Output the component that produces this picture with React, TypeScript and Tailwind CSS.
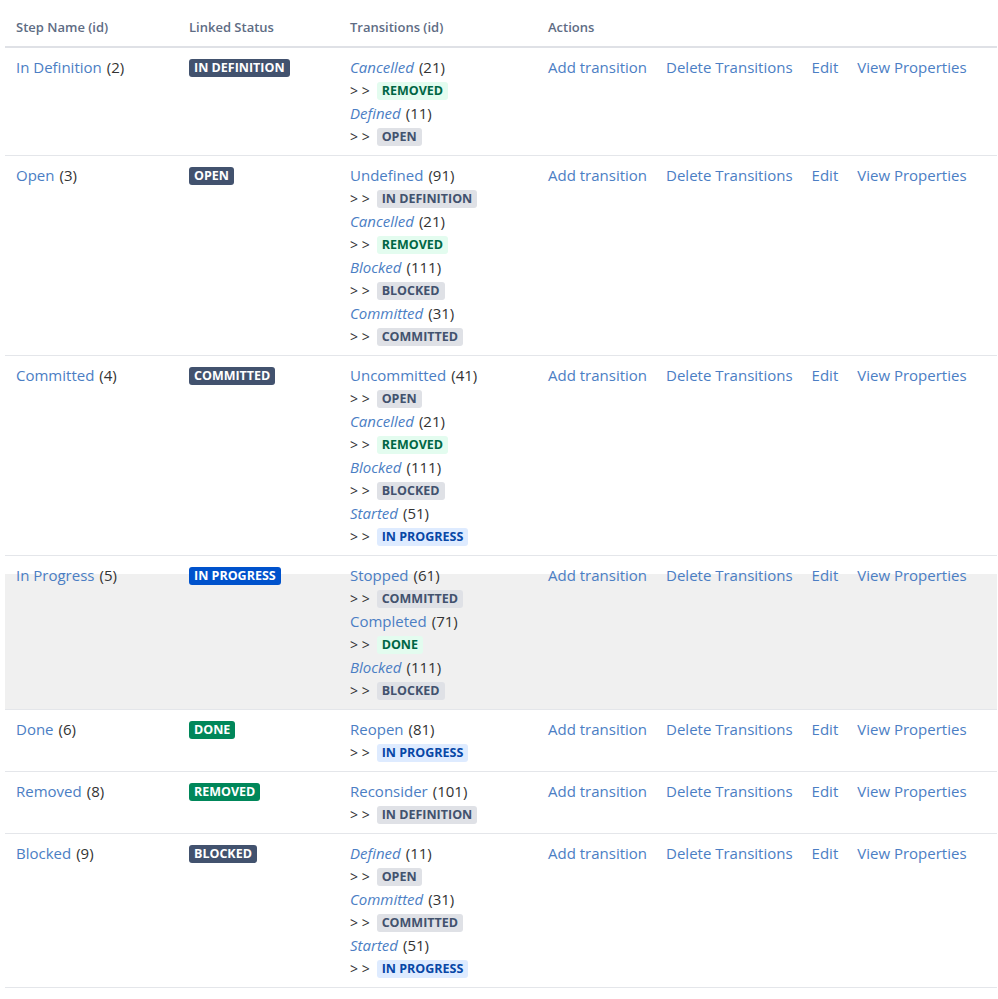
import React from "react";

type Kind = "dark" | "blue" | "green" | "sgrey" | "sgreen" | "sblue";

const lozClass: Record<Kind, string> = {
  dark: "bg-[#42526e] text-white",
  blue: "bg-[#0052cc] text-white",
  green: "bg-[#00875a] text-white",
  sgrey: "bg-[#dfe1e6] text-[#42526e]",
  sgreen: "bg-[#e3fcef] text-[#006644]",
  sblue: "bg-[#deebff] text-[#0747a6]",
};

const subtle: Record<string, Kind> = {
  "IN DEFINITION": "sgrey",
  OPEN: "sgrey",
  COMMITTED: "sgrey",
  BLOCKED: "sgrey",
  REMOVED: "sgreen",
  DONE: "sgreen",
  "IN PROGRESS": "sblue",
};

function Lozenge({ text, kind }: { text: string; kind: Kind }) {
  return (
    <span
      className={`inline-block rounded-[3px] px-[5px] text-[12.5px] font-bold leading-[18px] uppercase ${lozClass[kind]}`}
    >
      {text}
    </span>
  );
}

type Tr = { name: string; id: number; italic: boolean; to: string };
type Row = {
  name: string;
  id: number;
  status: string;
  kind: Kind;
  trs: Tr[];
  highlight?: boolean;
};

const rows: Row[] = [
  {
    name: "In Definition",
    id: 2,
    status: "IN DEFINITION",
    kind: "dark",
    trs: [
      { name: "Cancelled", id: 21, italic: true, to: "REMOVED" },
      { name: "Defined", id: 11, italic: true, to: "OPEN" },
    ],
  },
  {
    name: "Open",
    id: 3,
    status: "OPEN",
    kind: "dark",
    trs: [
      { name: "Undefined", id: 91, italic: false, to: "IN DEFINITION" },
      { name: "Cancelled", id: 21, italic: true, to: "REMOVED" },
      { name: "Blocked", id: 111, italic: true, to: "BLOCKED" },
      { name: "Committed", id: 31, italic: true, to: "COMMITTED" },
    ],
  },
  {
    name: "Committed",
    id: 4,
    status: "COMMITTED",
    kind: "dark",
    trs: [
      { name: "Uncommitted", id: 41, italic: false, to: "OPEN" },
      { name: "Cancelled", id: 21, italic: true, to: "REMOVED" },
      { name: "Blocked", id: 111, italic: true, to: "BLOCKED" },
      { name: "Started", id: 51, italic: true, to: "IN PROGRESS" },
    ],
  },
  {
    name: "In Progress",
    id: 5,
    status: "IN PROGRESS",
    kind: "blue",
    highlight: true,
    trs: [
      { name: "Stopped", id: 61, italic: false, to: "COMMITTED" },
      { name: "Completed", id: 71, italic: false, to: "DONE" },
      { name: "Blocked", id: 111, italic: true, to: "BLOCKED" },
    ],
  },
  {
    name: "Done",
    id: 6,
    status: "DONE",
    kind: "green",
    trs: [{ name: "Reopen", id: 81, italic: false, to: "IN PROGRESS" }],
  },
  {
    name: "Removed",
    id: 8,
    status: "REMOVED",
    kind: "green",
    trs: [{ name: "Reconsider", id: 101, italic: false, to: "IN DEFINITION" }],
  },
  {
    name: "Blocked",
    id: 9,
    status: "BLOCKED",
    kind: "dark",
    trs: [
      { name: "Defined", id: 11, italic: true, to: "OPEN" },
      { name: "Committed", id: 31, italic: true, to: "COMMITTED" },
      { name: "Started", id: 51, italic: true, to: "IN PROGRESS" },
    ],
  },
];

const cols = "grid grid-cols-[173px_161px_198px_1fr]";

export default function App() {
  return (
    <div
      className="min-h-[999px] bg-white text-[#333333]"
      style={{ fontFamily: '"Open Sans", "Noto Sans", sans-serif' }}
    >
      <div className="ml-[5px] w-[992px]">
        <div
          className={`${cols} border-b-2 border-[#dfe1e6] pt-[17px] pb-[9px] text-[13px] font-semibold leading-[20px] text-[#5e6c84]`}
        >
          <div className="pl-[11px]">Step Name (id)</div>
          <div className="pl-[11px]">Linked Status</div>
          <div className="pl-[11px]">Transitions (id)</div>
          <div className="pl-[11px]">Actions</div>
        </div>
        {rows.map((r) => (
          <div
            key={r.name}
            className={`${cols} border-b border-[#e4e6ea] pt-[8px] pb-[7px] text-[15px] ${
              r.highlight
                ? "bg-[linear-gradient(to_bottom,#ffffff_18px,#f0f0f0_18px)]"
                : ""
            }`}
          >
            <div className="flex h-[23px] items-center pl-[11px]">
              <span className="text-[#4b7ec4]">{r.name}</span>
              <span className="ml-[5px]">({r.id})</span>
            </div>
            <div className="flex h-[23px] items-center pl-[11px]">
              <Lozenge text={r.status} kind={r.kind} />
            </div>
            <div className="flex flex-col pl-[11px]">
              {r.trs.map((t, i) => (
                <React.Fragment key={i}>
                  <div className="flex h-[23px] items-center">
                    <span className={`text-[#4b7ec4] ${t.italic ? "italic" : ""}`}>
                      {t.name}
                    </span>
                    <span className="ml-[5px]">({t.id})</span>
                  </div>
                  <div className="flex h-[23px] items-center">
                    <span className="mr-[7px] text-[14px] text-[#333333]">&gt; &gt;</span>
                    <Lozenge text={t.to} kind={subtle[t.to]} />
                  </div>
                </React.Fragment>
              ))}
            </div>
            <div className="flex h-[23px] items-center gap-[19px] pl-[11px] text-[#4b7ec4]">
              <span>Add transition</span>
              <span>Delete Transitions</span>
              <span>Edit</span>
              <span>View Properties</span>
            </div>
          </div>
        ))}
      </div>
    </div>
  );
}
